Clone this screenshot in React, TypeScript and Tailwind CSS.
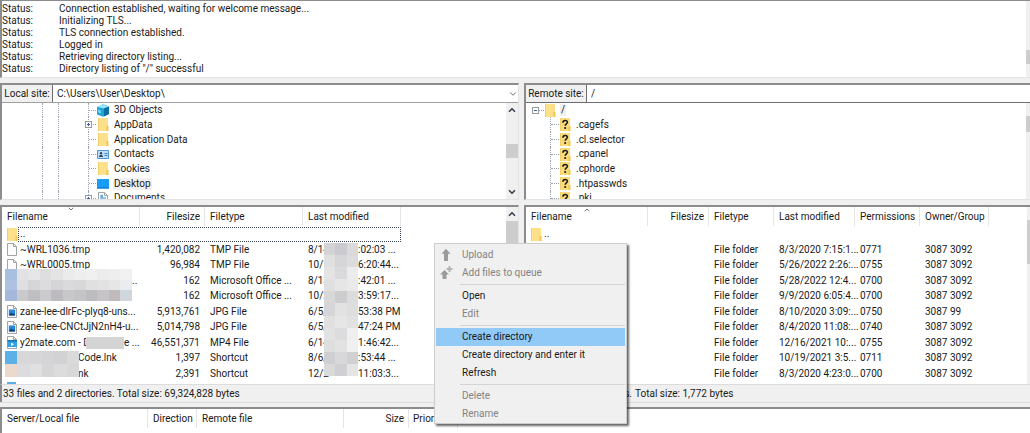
import React from 'react';
import clsx from 'clsx';
import { ChevronDown, ChevronUp } from 'lucide-react';

type IconKind = 'folder' | 'unknown' | 'file' | 'image' | 'video' | 'objects' | 'contacts' | 'desktop' | 'document' | 'none';

interface LocalFile {
  icon: IconKind;
  name: React.ReactNode;
  size: string;
  type: string;
  dateStart: string;
  dateEnd: string;
}

const LOG = [
  'Connection established, waiting for welcome message...',
  'Initializing TLS...',
  'TLS connection established.',
  'Logged in',
  'Retrieving directory listing...',
  'Directory listing of "/" successful',
];

const LOCAL_TREE: { icon: IconKind; name: string; expandable?: boolean; selected?: boolean }[] = [
  { icon: 'objects', name: '3D Objects' },
  { icon: 'folder', name: 'AppData', expandable: true },
  { icon: 'folder', name: 'Application Data' },
  { icon: 'contacts', name: 'Contacts' },
  { icon: 'folder', name: 'Cookies' },
  { icon: 'desktop', name: 'Desktop', selected: true },
  { icon: 'document', name: 'Documents', expandable: true },
];

const REMOTE_TREE = ['.cagefs', '.cl.selector', '.cpanel', '.cphorde', '.htpasswds', '.pki'];

const LOCAL_FILES: LocalFile[] = [
  { icon: 'file', name: '~WRL1036.tmp', size: '1,420,082', type: 'TMP File', dateStart: '8/14', dateEnd: ':02:03 ...' },
  { icon: 'file', name: '~WRL0005.tmp', size: '96,984', type: 'TMP File', dateStart: '10/1', dateEnd: '6:20:44...' },
  { icon: 'none', name: <span className="pl-[112px]">..</span>, size: '162', type: 'Microsoft Office ...', dateStart: '8/13', dateEnd: ':42:01 ...' },
  { icon: 'none', name: '', size: '162', type: 'Microsoft Office ...', dateStart: '10/2', dateEnd: '3:59:17...' },
  { icon: 'image', name: 'zane-lee-dlrFc-plyq8-uns...', size: '5,913,761', type: 'JPG File', dateStart: '6/5/', dateEnd: '53:38 PM' },
  { icon: 'image', name: 'zane-lee-CNCtJjN2nH4-u...', size: '5,014,798', type: 'JPG File', dateStart: '6/5/', dateEnd: '47:24 PM' },
  {
    icon: 'video',
    name: (
      <span className="flex">
        <span className="w-[66px]">y2mate.com - D</span>
        <span className="w-[38px] bg-[#d4d4d4]" />
        e ...
      </span>
    ),
    size: '46,551,371',
    type: 'MP4 File',
    dateStart: '6/14',
    dateEnd: '1:46:42...',
  },
  { icon: 'none', name: <span className="pl-[58px]">Code.lnk</span>, size: '1,397', type: 'Shortcut', dateStart: '8/6/', dateEnd: ':53:44 ...' },
  { icon: 'none', name: <span className="pl-[58px]">nk</span>, size: '2,391', type: 'Shortcut', dateStart: '12/2', dateEnd: '11:03:3...' },
];

const REMOTE_FILES = [
  ['8/3/2020 7:15:1...', '0771', '3087 3092'],
  ['5/26/2022 2:26:...', '0755', '3087 3092'],
  ['5/28/2022 12:4...', '0700', '3087 3092'],
  ['9/9/2020 6:05:4...', '0700', '3087 3092'],
  ['8/10/2020 3:09:...', '0750', '3087 99'],
  ['8/4/2020 11:08:...', '0740', '3087 3092'],
  ['12/16/2021 10:...', '0755', '3087 3092'],
  ['10/19/2021 3:5...', '0711', '3087 3092'],
  ['8/3/2020 4:23:0...', '0700', '3087 3092'],
];

// Blurred-out areas, one colour per block
const NAME_BLOCKS = [
  ['#a9bfe0', '#e2e2e4', '#e6e6e8', '#dededf', '#e4e4e4', '#ebebeb', '#eeeeee', '#f0f0f0', '#ececec', '#eeeeee', '#f1f1f1'],
  ['#adc1e0', '#dfdfe1', '#d6d6d8', '#dcdcdc', '#d5d5d7', '#dadadc', '#d8d8da', '#e0e0e0', '#e2e2e2', '#e6e6e6', '#e9edf0'],
  ['#a3b8da', '#cacacc', '#c0bec2', '#cbcbcd', '#bdbbbf', '#c8c8ca', '#c4c4c6', '#bcbcc0', '#c6c4c6', '#c0babc', '#cfd6dc'],
];
const LINK_BLOCKS = [
  ['#5bb0e8', '#d8d8da', '#d6d6d8', '#d4d4d6', '#d2d2d4', '#dadada'],
  ['#ead9cc', '#dcdcde', '#e0e0e0', '#d6d6d8', '#dcdcdc', '#d8d8d8'],
];
const DATE_BLOCKS = [
  ['#d4d4d6', '#cbcad0', '#dadada'],
  ['#e0e0e0', '#d6d6d8', '#dcdcdc'],
  ['#e4e4e4', '#dadadc', '#ececec'],
  ['#e0e0e0', '#e6e6e6', '#eaeaea'],
  ['#d8d8d8', '#cdcdcf', '#dcdcdc'],
  ['#d6d6d8', '#e2e2e2', '#dedede'],
  ['#e0e0e0', '#e6e6e6', '#e2e2e2'],
  ['#e2e2e2', '#dcdcde', '#efefef'],
  ['#dedede', '#e2e2e2', '#f0f0f0'],
  ['#cfcfd1', '#d8d8da', '#d0d0d2'],
  ['#dadada', '#d0d0d2', '#e4e4e4'],
];

const Blocks: React.FC<{ rows: string[][]; className: string }> = ({ rows, className }) => (
  <svg
    className={clsx('absolute', className)}
    viewBox={`0 0 ${rows[0].length} ${rows.length}`}
    preserveAspectRatio="none"
    shapeRendering="crispEdges"
    aria-hidden="true"
  >
    {rows.map((row, y) => row.map((fill, x) => <rect key={`${x}-${y}`} x={x} y={y} width="1" height="1" fill={fill} />))}
  </svg>
);

const Icon: React.FC<{ kind: IconKind }> = ({ kind }) => (
  <svg className="h-[13px] w-3 shrink-0" viewBox="0 0 12 13" aria-hidden="true">
    {(kind === 'folder' || kind === 'unknown') && (
      <>
        <path d="M1 0h10v13H1z" fill={kind === 'folder' ? '#fde08a' : '#fbdc78'} />
        <path d="M1 0h1v13H1z" fill="#f3cf6b" />
        <path d="M9.500 8h2v5h-2z" fill="#f2c54d" />
      </>
    )}
    {kind === 'unknown' && (
      <>
        <path d="M3.900 4.700c0-2.900 4.500-2.900 4.500-.4 0 1.600-2.200 1.500-2.200 3.500" fill="none" stroke="#1c1c1c" strokeWidth="1.600" />
        <circle cx="6.200" cy="10" r="1.100" fill="#1c1c1c" />
      </>
    )}
    {(kind === 'file' || kind === 'image' || kind === 'video' || kind === 'document') && (
      <path d="M1.500.5h6l3 3v9h-9z M7.500.5v3h3" fill="#fbfbfb" stroke="#9a9a9a" strokeWidth=".9" />
    )}
    {kind === 'image' && (
      <>
        <path d="M2.800 4.500h6.400v6H2.800z" fill="#2a86d8" />
        <path d="M2.800 10.500l2.400-3 1.600 1.700 1-1 1.400 2.300z" fill="#123a66" />
      </>
    )}
    {kind === 'video' && (
      <>
        <path d="M1.500 4h9.500v7H1.500z" fill="#2fa3e6" />
        <path d="M1.500 4h9.500v1.600H1.500z" fill="#1878b8" />
        <path d="M5 6.500l3 1.700-3 1.700z" fill="#fff" />
      </>
    )}
    {kind === 'document' && <path d="M3 4h3M3 6h6M3 8h6M3 10h6M5 2.500v4" fill="none" stroke="#3a93d8" strokeWidth="1" />}
    {kind === 'objects' && (
      <>
        <path d="M0 3L6 .3 12 2.500v7.500L6 12.800 0 10.500z" fill="#1fa5d8" />
        <path d="M0 3l6-2.700 6 2.200-5 2z" fill="#9be4f7" />
        <path d="M7 4.500l5-2v7.500l-5 2.600z" fill="#0c6f9f" />
        <path d="M1 5.500l3 1v3l-3-1z" fill="#6fd3f0" />
      </>
    )}
    {kind === 'contacts' && (
      <>
        <path d="M.5 2.500h11v8H.5z" fill="#bfe0f7" stroke="#4f94cf" />
        <circle cx="4" cy="5.200" r="1.200" fill="#2c4a66" />
        <path d="M2 9c0-3 4-3 4 0z" fill="#2c4a66" />
        <path d="M7.500 5.500h3M7.500 7.500h3" stroke="#3476ad" strokeWidth=".9" />
      </>
    )}
    {kind === 'desktop' && (
      <>
        <path d="M0 2h12v9.500H0z" fill="#1a9cf5" />
        <path d="M0 10.500h12v1H0z" fill="#0b6fc0" />
      </>
    )}
  </svg>
);

const Expander: React.FC<{ open?: boolean; label: string; className: string }> = ({ open, label, className }) => (
  <button
    type="button"
    aria-label={label}
    className={clsx('absolute top-1 flex size-[7px] items-center justify-center border border-[#9a9a9a] bg-white', className)}
  >
    <svg className="size-[5px] shrink-0" viewBox="0 0 5 5" aria-hidden="true">
      <path d={open ? 'M1 2.500h3' : 'M1 2.500h3M2.500 1v3'} stroke="#3c5aa8" />
    </svg>
  </button>
);

const Th: React.FC<{ className?: string; sort?: 'up' | 'down'; children: React.ReactNode }> = ({ className, sort, children }) => (
  <th scope="col" className={clsx('relative h-[19px] border-r border-[#e5e5e5] p-0 font-normal whitespace-nowrap', className)}>
    {children}
    {sort === 'up' && <ChevronUp className="absolute -top-px left-1/2 size-2 -translate-x-1/2 text-gray-500" strokeWidth={3} />}
    {sort === 'down' && <ChevronDown className="absolute -top-0.5 left-1/2 size-2 -translate-x-1/2 text-gray-500" strokeWidth={3} />}
  </th>
);

const PANE = 'border-t-2 border-l-2 border-[#8c8c8c] bg-white';
const ROW = 'odd:h-4 even:h-[15px]';
const TREE_ROW = 'relative flex h-[15px] items-center nth-[3n+1]:h-[14px]';

const MenuItem: React.FC<{ disabled?: boolean; active?: boolean; icon?: React.ReactNode; children: React.ReactNode }> = ({
  disabled,
  active,
  icon,
  children,
}) => (
  <button
    type="button"
    role="menuitem"
    disabled={disabled}
    className={clsx(
      'flex h-[18px] w-full items-center text-left',
      active && 'bg-[#91c9f7]',
      disabled ? 'text-[#838383]' : 'text-[#1a1a1a]'
    )}
  >
    <span className="flex w-[26px] pl-[3px]">{icon}</span>
    {children}
  </button>
);

const Separator = () => <div role="separator" className="my-[2px] ml-6 h-px bg-[#d4d4d4]" />;

const ContextMenu = () => (
  <div
    role="menu"
    className="absolute top-[243px] left-[434px] w-[193px] border border-[#cccccc] bg-[#f0f0f0] px-px pt-0.5 shadow-[2px_2px_2px_rgba(0,0,0,0.6)]"
  >
    <MenuItem
      disabled
      icon={
        <svg className="size-[14px]" viewBox="0 0 14 14" aria-hidden="true">
          <path d="M7 .8l4.500 5H9V13H5V5.800H2.500z" fill="#9b9b9b" />
        </svg>
      }
    >
      Upload
    </MenuItem>
    <MenuItem
      disabled
      icon={
        <svg className="size-[14px]" viewBox="0 0 14 14" aria-hidden="true">
          <path d="M5.500 4l4.500 4.500H7.500V13h-4V8.500H1z" fill="#9b9b9b" />
          <path d="M10.500 0v6M7.500 3h6" stroke="#b5b5b5" strokeWidth="2" />
        </svg>
      }
    >
      Add files to queue
    </MenuItem>
    <Separator />
    <MenuItem>Open</MenuItem>
    <MenuItem disabled>Edit</MenuItem>
    <Separator />
    <MenuItem active>Create directory</MenuItem>
    <MenuItem>Create directory and enter it</MenuItem>
    <MenuItem>Refresh</MenuItem>
    <Separator />
    <MenuItem disabled>Delete</MenuItem>
    <MenuItem disabled>Rename</MenuItem>
  </div>
);

const App: React.FC = () => {
  return (
    <div className="relative flex min-h-screen flex-col overflow-hidden bg-[#f0f0f0] font-['Roboto','Open_Sans',sans-serif] text-[10px] leading-3 text-[#1a1a1a]">
      {/* Message log */}
      <section aria-label="Message log" className="flex border-y border-l-2 border-t-[#8c8c8c] border-b-[#e3e3e3] border-l-[#8c8c8c] bg-white">
        <ul className="flex-1 py-[2px]">
          {LOG.map(message => (
            <li key={message} className="flex">
              <span className="w-[57px]">Status:</span>
              {message}
            </li>
          ))}
        </ul>
        <div className="w-1 bg-[#f0f0f0] pt-[49px]">
          <div className="h-[14px] bg-[#cdcdcd]" />
        </div>
      </section>

      <div className="mt-[5px] grid grid-cols-[519px_1fr] gap-[5px]">
        {/* Local directory tree */}
        <section aria-label="Local site" className={clsx(PANE, 'border-r border-b border-r-[#e3e3e3] border-b-[#e3e3e3]')}>
          <div className="flex h-[18px] border-b border-[#a0a0a0]">
            <label htmlFor="local-site" className="flex w-[51px] items-center justify-center border-r border-[#6e6e6e] bg-[#f0f0f0]">
              Local site:
            </label>
            <div className="relative flex-1">
              <select id="local-site" className="h-full w-full appearance-none bg-white px-1 outline-none">
                <option>C:\Users\User\Desktop\</option>
              </select>
              <ChevronDown className="pointer-events-none absolute top-1 right-0 size-[10px] text-gray-600" />
            </div>
          </div>
          <div className="flex h-[96px] overflow-hidden">
            <ul className="flex-1">
              {LOCAL_TREE.map(node => (
                <li key={node.name} className={TREE_ROW}>
                  <span className="h-full w-[41px] border-r border-dotted border-gray-400" />
                  <span className="h-full w-4 border-r border-dotted border-gray-400" />
                  <span className="h-full w-[30px] border-r border-dotted border-gray-400" />
                  <span className="mr-px w-[7px] border-t border-dotted border-gray-400" />
                  {node.expandable && <Expander label={`Expand ${node.name}`} className="left-[83px]" />}
                  <Icon kind={node.icon} />
                  <span className={clsx('ml-1 px-px', node.selected && 'bg-[#f0f0f0]')}>{node.name}</span>
                </li>
              ))}
            </ul>
            <div className="flex w-3 flex-col items-center bg-[#f0f0f0]">
              <ChevronUp className="mt-[2px] size-[10px] text-gray-700" strokeWidth={4} />
              <div className="mt-[29px] h-[14px] w-full bg-[#cdcdcd]" />
              <ChevronDown className="mt-auto mb-[2px] size-[10px] text-gray-700" strokeWidth={4} />
            </div>
          </div>
        </section>

        {/* Remote directory tree */}
        <section aria-label="Remote site" className={clsx(PANE, 'border-b border-b-[#e3e3e3]')}>
          <div className="flex h-[18px] border-b border-[#6e6e6e]">
            <label htmlFor="remote-site" className="flex w-[61px] items-center justify-center border-r border-[#6e6e6e] bg-[#f0f0f0]">
              Remote site:
            </label>
            <input id="remote-site" defaultValue="/" className="min-w-0 flex-1 bg-white px-1 outline-none" />
          </div>
          <div className="flex h-[96px] overflow-hidden">
            <ul className="flex-1">
              <li className={TREE_ROW}>
                <Expander open label="Collapse /" className="left-[6px]" />
                <span className="ml-[13px] w-[5px] border-t border-dotted border-gray-400" />
                <Icon kind="folder" />
                <span className="ml-1 bg-[#f0f0f0] px-px">/</span>
              </li>
              {REMOTE_TREE.map(name => (
                <li key={name} className={TREE_ROW}>
                  <span className="h-full w-[25px] border-r border-dotted border-gray-400" />
                  <span className="w-2 border-t border-dotted border-gray-400" />
                  <Icon kind="unknown" />
                  <span className="ml-[5px]">{name}</span>
                </li>
              ))}
            </ul>
            <div className="w-1 bg-[#f0f0f0] pt-[13px]">
              <div className="h-4 bg-[#cdcdcd]" />
            </div>
          </div>
        </section>
      </div>

      <div className="mt-[5px] grid grid-cols-[519px_1fr] gap-[5px]">
        {/* Local files */}
        <section aria-label="Local files" className={clsx(PANE, 'border-r border-r-[#e3e3e3]')}>
          <div className="relative flex h-[177px] items-start overflow-hidden">
            <table className="w-[399px] table-fixed border-separate border-spacing-0 whitespace-nowrap">
              <thead>
                <tr>
                  <Th sort="down" className="w-[138px] pl-[5px] text-left">Filename</Th>
                  <Th className="w-[65px] pr-1 text-right">Filesize</Th>
                  <Th className="w-[98px] pl-[5px] text-left">Filetype</Th>
                  <Th className="w-[98px] pl-[5px] text-left">Last modified</Th>
                </tr>
              </thead>
              <tbody>
                <tr className={ROW}>
                  <td colSpan={4} className="p-0">
                    <div className="flex items-center pl-1">
                      <Icon kind="folder" />
                      <span className="h-[15px] flex-1 border border-dotted border-gray-700 pl-px">..</span>
                    </div>
                  </td>
                </tr>
                {LOCAL_FILES.map((file, i) => (
                  <tr key={i} className={ROW}>
                    <td className="p-0">
                      <div className="flex items-center gap-0.5 pl-1">
                        <Icon kind={file.icon} />
                        {file.name}
                      </div>
                    </td>
                    <td className="p-0 pr-[5px] text-right">{file.size}</td>
                    <td className="p-0 pl-[5px]">{file.type}</td>
                    <td className="p-0 pl-[5px]">
                      <div className="flex">
                        <span className="w-[50px]">{file.dateStart}</span>
                        {file.dateEnd}
                      </div>
                    </td>
                  </tr>
                ))}
              </tbody>
            </table>
            <Blocks rows={NAME_BLOCKS} className="top-[62px] left-[3px] h-8 w-[127px]" />
            <Blocks rows={LINK_BLOCKS} className="top-[144px] left-[3px] h-[26px] w-[74px]" />
            <Blocks rows={DATE_BLOCKS} className="top-[36px] left-[322px] h-[133px] w-[34px]" />
            <div className="absolute top-[175px] left-[5px] h-[2px] w-[9px] bg-[#5bb0e8]" />
            <div className="ml-auto flex h-full w-3 flex-col items-center bg-[#f0f0f0]">
              <ChevronUp className="my-[2px] size-[10px] shrink-0 text-gray-700" strokeWidth={4} />
              <div className="h-[72px] w-full bg-[#cdcdcd]" />
            </div>
          </div>
        </section>

        {/* Remote files */}
        <section aria-label="Remote files" className={PANE}>
          <div className="flex h-[177px] items-start overflow-hidden">
            <table className="w-[463px] table-fixed border-separate border-spacing-0 whitespace-nowrap">
              <thead>
                <tr>
                  <Th sort="up" className="w-[122px] pl-[5px] text-left">Filename</Th>
                  <Th className="w-[61px] pr-1 text-right">Filesize</Th>
                  <Th className="w-[65px] pl-[5px] text-left">Filetype</Th>
                  <Th className="w-[81px] pl-[5px] text-left">Last modified</Th>
                  <Th className="w-[65px] pl-[5px] text-left">Permissions</Th>
                  <Th className="w-[69px] pl-[5px] text-left">Owner/Group</Th>
                </tr>
              </thead>
              <tbody>
                <tr className={ROW}>
                  <td colSpan={6} className="p-0">
                    <div className="flex items-center gap-0.5 pl-1">
                      <Icon kind="folder" />
                      ..
                    </div>
                  </td>
                </tr>
                {REMOTE_FILES.map(([modified, permissions, owner], i) => (
                  <tr key={i} className={ROW}>
                    <td />
                    <td />
                    <td className="p-0 pl-[5px]">File folder</td>
                    <td className="p-0 pl-[5px]">{modified}</td>
                    <td className="p-0 pl-[5px]">{permissions}</td>
                    <td className="p-0 pl-[5px]">{owner}</td>
                  </tr>
                ))}
              </tbody>
            </table>
            <div className="ml-auto h-full w-[3px] bg-[#f0f0f0] pt-[13px]">
              <div className="h-11 bg-[#cdcdcd]" />
            </div>
          </div>
        </section>
      </div>

      {/* Status bars */}
      <div className="grid grid-cols-[519px_1fr] gap-[5px] border-b border-[#dcdcdc]">
        <p className="flex h-[18px] items-center border-t border-l-2 border-t-[#dcdcdc] border-l-[#8c8c8c] pl-px">
          33 files and 2 directories. Total size: 69,324,828 bytes
        </p>
        <p className="flex h-[18px] items-center border-t border-[#dcdcdc] pl-[5px]">
          <span className="w-[103px] text-right whitespace-nowrap">directories.</span>
          <span className="pl-[3px]">Total size: 1,772 bytes</span>
        </p>
      </div>

      {/* Transfer queue */}
      <section aria-label="Transfer queue" className={clsx(PANE, 'mt-1 flex-1')}>
        <table className="w-[456px] table-fixed border-separate border-spacing-0">
          <thead>
            <tr>
              <Th className="w-[146px] pl-[5px] text-left">Server/Local file</Th>
              <Th className="w-[49px] pl-[5px] text-left">Direction</Th>
              <Th className="w-[147px] pl-[5px] text-left">Remote file</Th>
              <Th className="w-[65px] pr-1 text-right">Size</Th>
              <Th className="w-[49px] pl-1 text-left">Priority</Th>
            </tr>
          </thead>
        </table>
      </section>

      <ContextMenu />
    </div>
  );
};

export default App;
